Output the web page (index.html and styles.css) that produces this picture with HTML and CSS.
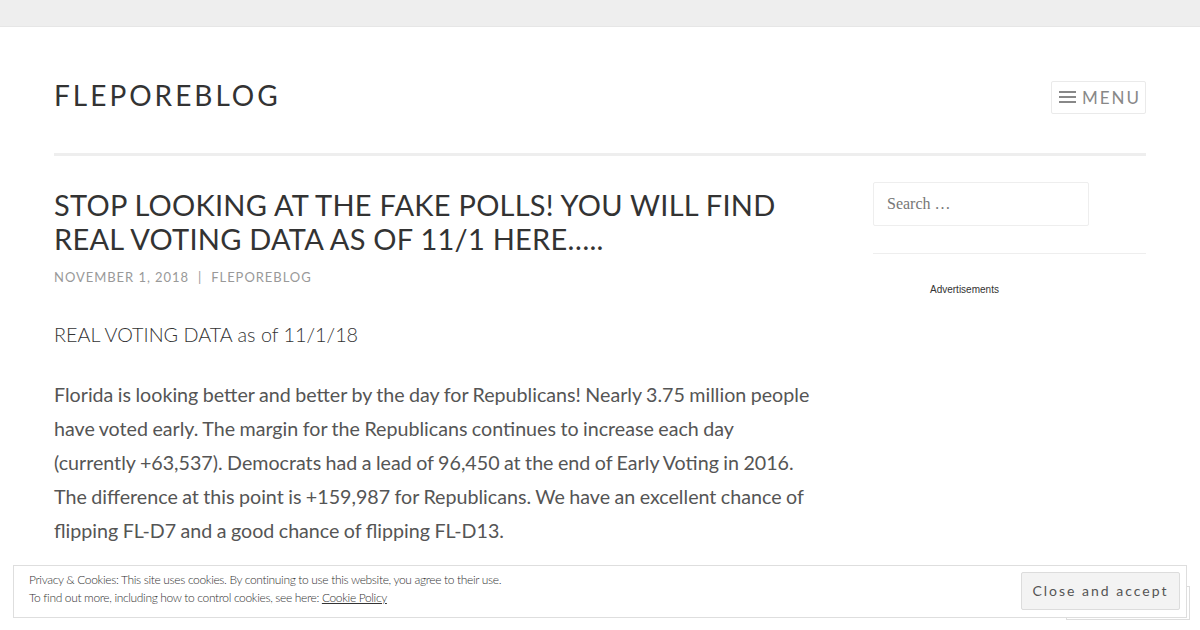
FILE: index.html
```html
<!DOCTYPE html>
<html>
<head>
<meta charset="utf-8">
<link rel="stylesheet" href="styles.css">
</head>
<body>
<div class="topbar"></div>
<div class="page">
  <header class="site-header">
    <div class="site-title">FLEPOREBLOG</div>
    <button class="menu-toggle">
      <svg class="burger" width="17" height="14" viewBox="0 0 17 14"><rect x="0" y="1" width="17" height="2" fill="#888"/><rect x="0" y="6" width="17" height="2" fill="#888"/><rect x="0" y="11" width="17" height="2" fill="#888"/></svg>
      <span>MENU</span>
    </button>
  </header>
  <div class="content">
    <main class="main">
      <h1 class="entry-title">STOP LOOKING AT THE FAKE POLLS! YOU WILL FIND REAL VOTING DATA AS OF 11/1 HERE…..</h1>
      <div class="meta"><span>NOVEMBER 1, 2018</span><span class="sep">|</span><span>FLEPOREBLOG</span></div>
      <p class="lead">REAL VOTING DATA as of 11/1/18</p>
      <p class="body">Florida is looking better and better by the day for Republicans! Nearly 3.75 million people have voted early. The margin for the Republicans continues to increase each day (currently +63,537). Democrats had a lead of 96,450 at the end of Early Voting in 2016. The difference at this point is +159,987 for Republicans. We have an excellent chance of flipping FL-D7 and a good chance of flipping FL-D13.</p>
    </main>
    <aside class="sidebar">
      <div class="search-box">Search …</div>
      <div class="side-rule"></div>
      <div class="ads">Advertisements</div>
    </aside>
  </div>
</div>
<div class="follow-box"></div>
<div class="cookie-banner">
  <div class="cookie-text">
    <div>Privacy &amp; Cookies: This site uses cookies. By continuing to use this website, you agree to their use.</div>
    <div>To find out more, including how to control cookies, see here: <a href="#">Cookie Policy</a></div>
  </div>
  <button class="accept">Close and accept</button>
</div>
</body>
</html>
```
FILE: styles.css
```css
html, body {
  margin: 0;
  padding: 0;
  background: #fff;
  height: 630px;
  overflow: hidden;
}
body {
  font-family: Lato, "Open Sans", sans-serif;
  color: #333;
  position: relative;
}
.topbar {
  height: 26px;
  background: #eeeeee;
  border-bottom: 1px solid #e6e6e6;
}
.page {
  padding: 0 54px;
}
.site-header {
  display: flex;
  justify-content: space-between;
  align-items: center;
  padding-top: 2px;
  border-bottom: 3px solid #eeeeee;
  box-sizing: border-box;
  height: 129px;
}
.site-title {
  font-size: 28px;
  letter-spacing: 3px;
  color: #333;
  margin-top: 8px;
}
.menu-toggle {
  display: flex;
  align-items: center;
  gap: 6px;
  background: #fff;
  border: 1px solid #eaeaea;
  border-radius: 2px;
  height: 33px;
  width: 95px;
  padding: 0 0 0 7px;
  margin-top: 12px;
  font-family: Lato, sans-serif;
  font-size: 17px;
  letter-spacing: 2px;
  color: #888;
  box-sizing: border-box;
}
.burger { display: block; }
.content {
  display: flex;
  justify-content: space-between;
}
.main {
  width: 762px;
}
.entry-title {
  margin: 32px 0 0;
  font-size: 29px;
  font-weight: 400;
  line-height: 34px;
  color: #333;
  letter-spacing: 0.25px;
}
.meta {
  margin-top: 13px;
  font-size: 13px;
  letter-spacing: 0.95px;
  color: #999;
}
.meta .sep {
  margin: 0 9px;
}
.lead {
  margin: 32px 0 0;
  font-size: 19.8px;
  font-weight: 300;
  line-height: 34px;
  color: #333;
}
.body {
  margin: 27px 0 0;
  font-size: 19.66px;
  line-height: 34px;
  color: #555;
  word-spacing: -0.6px;
}
.sidebar {
  width: 273px;
  padding-top: 26px;
}
.search-box {
  width: 216px;
  height: 44px;
  box-sizing: border-box;
  border: 1px solid #eeeeee;
  border-radius: 2px;
  font-family: "Liberation Serif", serif;
  font-size: 16px;
  color: #777;
  padding: 12px 13px;
}
.side-rule {
  margin-top: 27px;
  border-top: 1px solid #eeeeee;
}
.ads {
  margin-top: 30px;
  padding-left: 57px;
  font-family: "Liberation Sans", Arial, sans-serif;
  font-size: 10px;
  color: #333;
}
.follow-box {
  position: absolute;
  left: 1066px;
  top: 586px;
  width: 124px;
  height: 34px;
  border: 1px solid #ddd;
  background: #fff;
  box-sizing: border-box;
}
.cookie-banner {
  position: absolute;
  left: 13px;
  top: 565px;
  width: 1174px;
  height: 53px;
  box-sizing: border-box;
  border: 1px solid #dedede;
  background: #fff;
  display: flex;
  align-items: center;
  justify-content: space-between;
  padding: 0 6px 0 15px;
}
.cookie-text {
  font-size: 12px;
  font-weight: 300;
  line-height: 18px;
  color: #333;
  letter-spacing: -0.35px;
  margin-top: -6px;
}
.cookie-text a {
  color: #333;
}
.accept {
  height: 38px;
  width: 159px;
  box-sizing: border-box;
  background: #f3f3f3;
  border: 1px solid #dcdcdc;
  border-radius: 2px;
  font-family: Lato, sans-serif;
  font-size: 14px;
  letter-spacing: 2px;
  color: #555;
  padding: 0;
  margin-top: -2px;
}
```
